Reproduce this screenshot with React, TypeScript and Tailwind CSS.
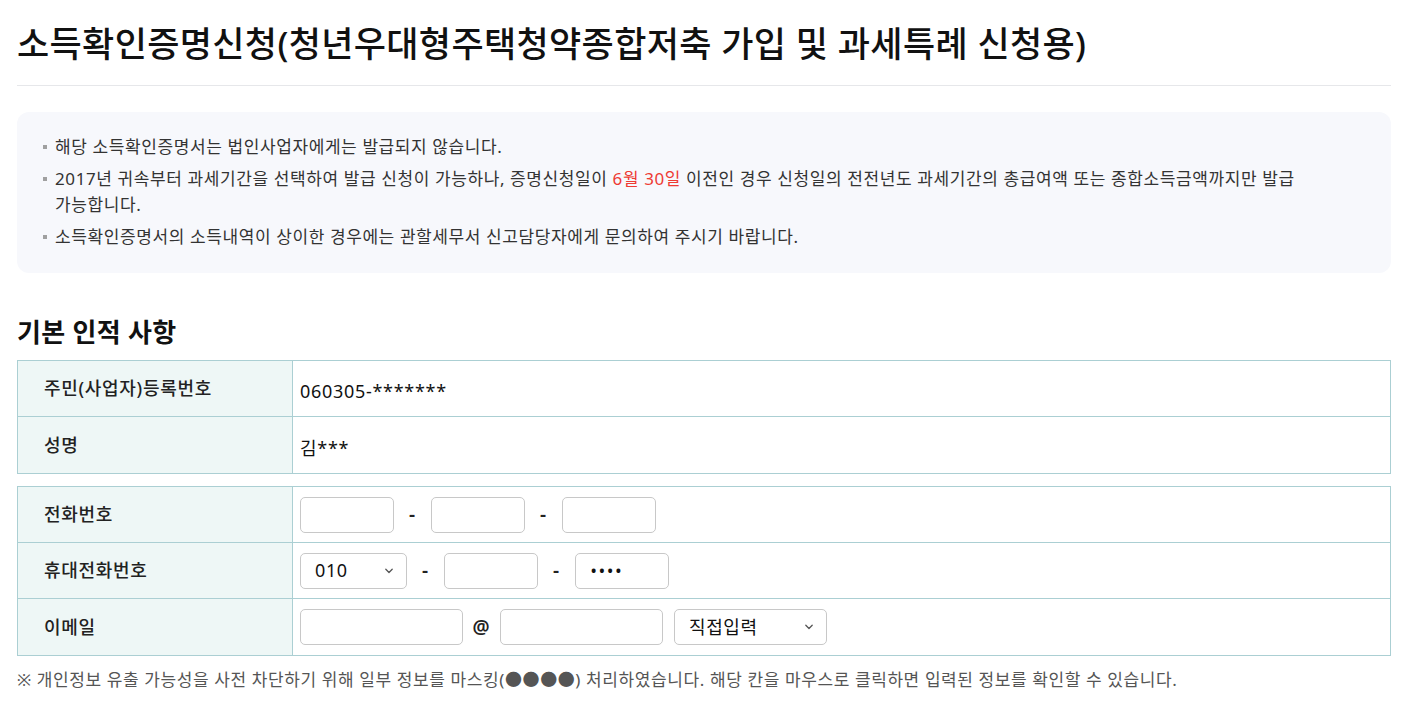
import React from "react";

const font = { fontFamily: '"Noto Sans", "Noto Sans CJK KR", sans-serif' };

function Chevron() {
  return (
    <svg
      className="pointer-events-none absolute right-[13px] top-1/2 -translate-y-1/2"
      width="10"
      height="6"
      viewBox="0 0 10 6"
      fill="none"
    >
      <path d="M1.8 1.3 5 4.5 8.2 1.3" stroke="#555" strokeWidth="1.3" strokeLinecap="round" strokeLinejoin="round" />
    </svg>
  );
}

function TextBox({ w, value }: { w: string; value?: string }) {
  return (
    <input
      readOnly
      defaultValue={value}
      className={`${w} h-9 rounded-[5px] border border-[#c8c8c8] bg-white px-[15px] text-[18px] text-[#111] outline-none`}
    />
  );
}

function SecretBox({ w }: { w: string }) {
  return (
    <input
      readOnly
      defaultValue="••••"
      className={`${w} h-9 rounded-[5px] border border-[#c8c8c8] bg-white pl-[15px] text-[14px] font-bold tracking-[3px] text-[#111] outline-none`}
    />
  );
}

function SelectBox({ w, value, options }: { w: string; value: string; options: string[] }) {
  return (
    <div className={`relative ${w} h-9`}>
      <select
        defaultValue={value}
        className="h-full w-full appearance-none rounded-[5px] border border-[#c8c8c8] bg-white pl-[14px] pr-8 text-[18px] tracking-[0.6px] text-[#111] outline-none"
      >
        {options.map((o) => (
          <option key={o}>{o}</option>
        ))}
      </select>
      <Chevron />
    </div>
  );
}

function Sep({ children }: { children: React.ReactNode }) {
  return <span className="w-[37px] text-center text-[19px] font-semibold text-[#222]">{children}</span>;
}

function Row({ label, children, last }: { label: string; children: React.ReactNode; last?: boolean }) {
  return (
    <div className={`flex h-14 ${last ? "" : "border-b border-[#abcfd3]"}`}>
      <div className="flex w-[275px] shrink-0 items-center border-r border-[#abcfd3] bg-[#eef7f6] pl-[26px] text-[18px] font-medium tracking-[0.7px] text-[#222]">
        {label}
      </div>
      <div className="flex flex-1 items-center pl-[7px] text-[18px] tracking-[0.7px] text-[#111]">{children}</div>
    </div>
  );
}

const notices = [
  <>해당 소득확인증명서는 법인사업자에게는 발급되지 않습니다.</>,
  <>
    2017년 귀속부터 과세기간을 선택하여 발급 신청이 가능하나, 증명신청일이{" "}
    <span className="text-[#ee3b34]">6월 30일</span> 이전인 경우 신청일의 전전년도 과세기간의 총급여액 또는
    종합소득금액까지만 발급 가능합니다.
  </>,
  <>소득확인증명서의 소득내역이 상이한 경우에는 관할세무서 신고담당자에게 문의하여 주시기 바랍니다.</>,
];

export default function App() {
  return (
    <div className="min-h-screen bg-white pl-[17px] pr-[15px]" style={font}>
      <h1 className="border-b border-[#e6e7ea] pt-[20px] pb-[17px] text-[35px] font-medium leading-[48px] tracking-[0.35px] text-[#111]">
        소득확인증명신청(청년우대형주택청약종합저축 가입 및 과세특례 신청용)
      </h1>

      <div className="mt-[26px] rounded-xl bg-[#f7f8fc] pt-[22px] pb-[23px] pl-[26px] pr-[26px]">
        <ul className="flex flex-col gap-[6px]">
          {notices.map((n, i) => (
            <li key={i} className="flex text-[17px] leading-[26px] tracking-[0.6px] text-[#333]">
              <span className="mt-[11px] mr-[8px] h-[4px] w-[4px] shrink-0 bg-[#a0a0a0]" />
              <span className="pr-[50px]">{n}</span>
            </li>
          ))}
        </ul>
      </div>

      <h2 className="mt-[41px] mb-[10px] text-[26px] font-semibold leading-[36px] tracking-[0.3px] text-[#111]">
        기본 인적 사항
      </h2>

      <div className="border border-[#abcfd3]">
        <Row label="주민(사업자)등록번호">
          <span className="pt-[6px]">060305-*******</span>
        </Row>
        <Row label="성명" last>
          <span className="pt-[6px]">김***</span>
        </Row>
      </div>

      <div className="mt-[12px] border border-[#abcfd3]">
        <Row label="전화번호">
          <TextBox w="w-[94px]" />
          <Sep>-</Sep>
          <TextBox w="w-[94px]" />
          <Sep>-</Sep>
          <TextBox w="w-[94px]" />
        </Row>
        <Row label="휴대전화번호">
          <SelectBox w="w-[107px]" value="010" options={["010", "011", "016", "017", "018", "019"]} />
          <Sep>-</Sep>
          <TextBox w="w-[94px]" />
          <Sep>-</Sep>
          <SecretBox w="w-[94px]" />
        </Row>
        <Row label="이메일" last>
          <TextBox w="w-[163px]" />
          <Sep>@</Sep>
          <TextBox w="w-[163px]" />
          <div className="ml-[11px]">
            <SelectBox w="w-[153px]" value="직접입력" options={["직접입력", "naver.com", "gmail.com", "daum.net"]} />
          </div>
        </Row>
      </div>

      <p className="mt-[12px] text-[17px] leading-[24px] tracking-[0.6px] text-[#555]">
        ※ 개인정보 유출 가능성을 사전 차단하기 위해 일부 정보를 마스킹(●●●●) 처리하였습니다. 해당 칸을 마우스로 클릭하면
        입력된 정보를 확인할 수 있습니다.
      </p>
    </div>
  );
}
